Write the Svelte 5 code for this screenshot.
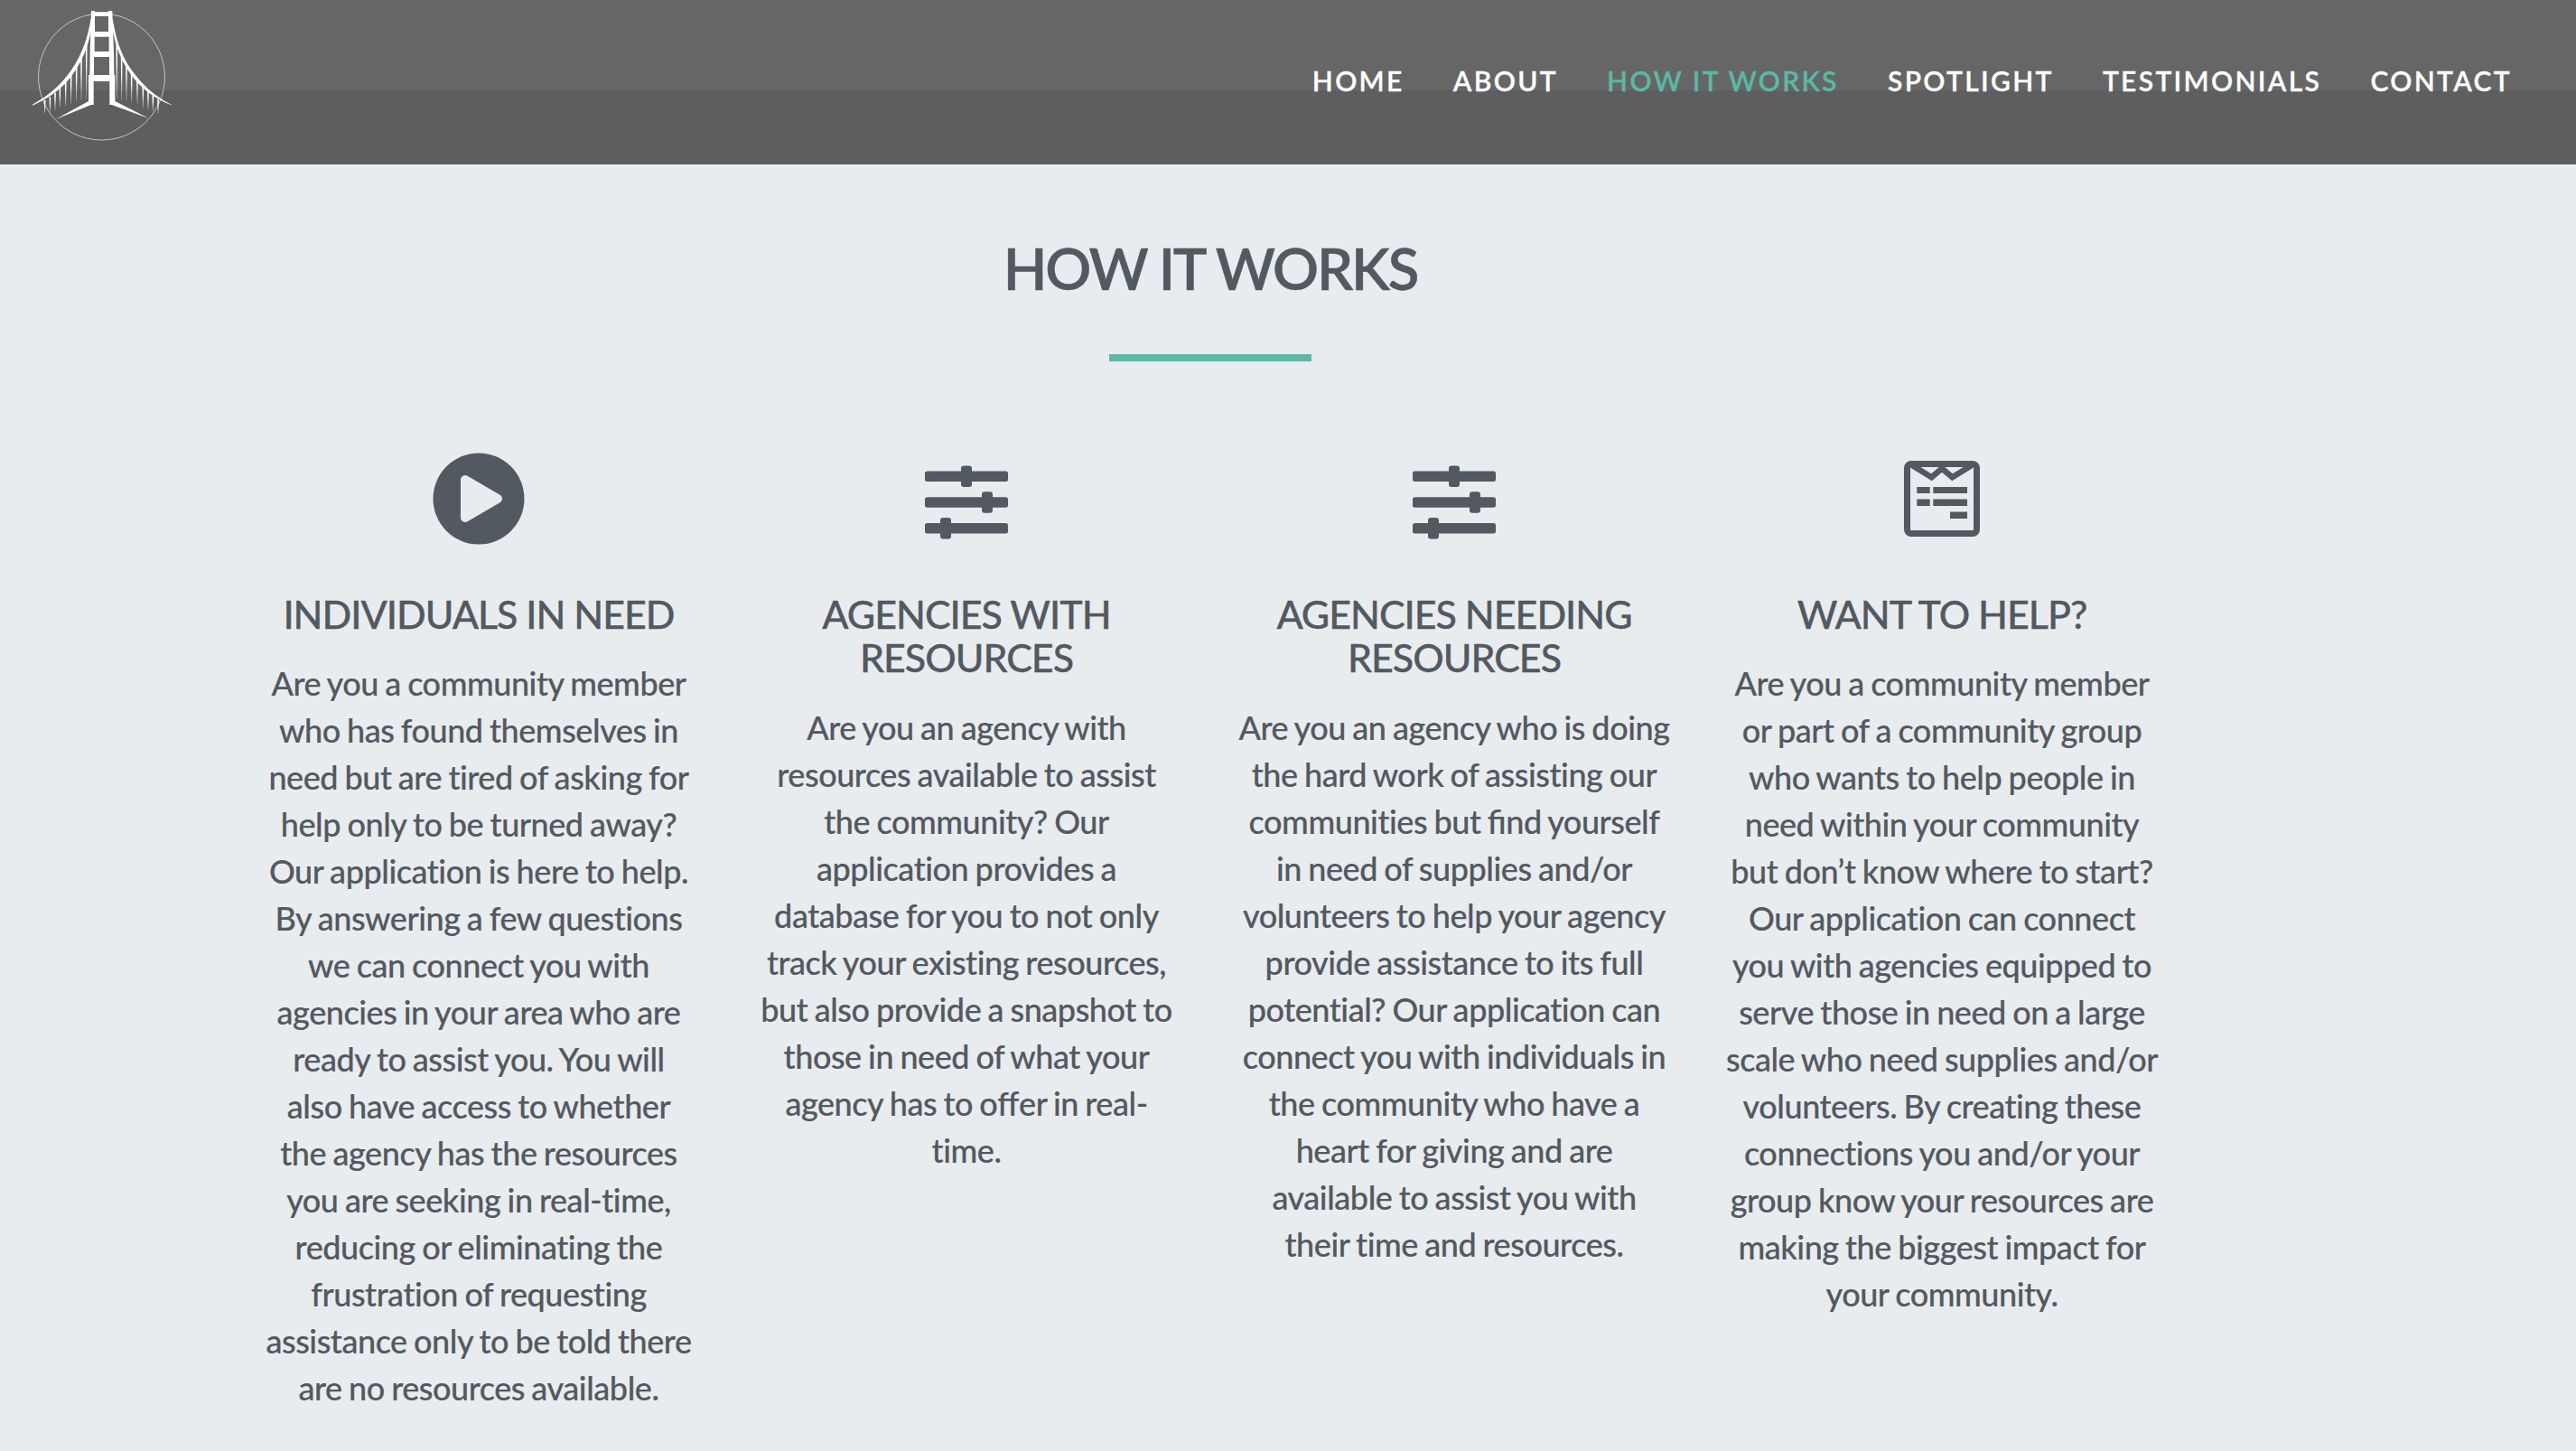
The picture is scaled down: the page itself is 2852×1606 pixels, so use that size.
<script>
  const nav = ['Home', 'About', 'How it works', 'Spotlight', 'Testimonials', 'Contact'];
  const active = 'How it works';

  const columns = [
    {
      icon: 'play',
      title: ['Individuals in need'],
      lines: [
        'Are you a community member', 'who has found themselves in', 'need but are tired of asking for',
        'help only to be turned away?', 'Our application is here to help.', 'By answering a few questions',
        'we can connect you with', 'agencies in your area who are', 'ready to assist you. You will',
        'also have access to whether', 'the agency has the resources', 'you are seeking in real-time,',
        'reducing or eliminating the', 'frustration of requesting', 'assistance only to be told there',
        'are no resources available.'
      ]
    },
    {
      icon: 'sliders',
      title: ['Agencies with', 'resources'],
      lines: [
        'Are you an agency with', 'resources available to assist', 'the community? Our', 'application provides a',
        'database for you to not only', 'track your existing resources,', 'but also provide a snapshot to',
        'those in need of what your', 'agency has to offer in real-', 'time.'
      ]
    },
    {
      icon: 'sliders',
      title: ['Agencies needing', 'resources'],
      lines: [
        'Are you an agency who is doing', 'the hard work of assisting our', 'communities but find yourself',
        'in need of supplies and/or', 'volunteers to help your agency', 'provide assistance to its full',
        'potential? Our application can', 'connect you with individuals in', 'the community who have a',
        'heart for giving and are', 'available to assist you with', 'their time and resources.'
      ]
    },
    {
      icon: 'form',
      title: ['Want to help?'],
      lines: [
        'Are you a community member', 'or part of a community group', 'who wants to help people in',
        'need within your community', 'but don’t know where to start?', 'Our application can connect',
        'you with agencies equipped to', 'serve those in need on a large', 'scale who need supplies and/or',
        'volunteers. By creating these', 'connections you and/or your', 'group know your resources are',
        'making the biggest impact for', 'your community.'
      ]
    }
  ];

  // Letter pairs set as ligatures are split out so they can be styled
  const pieces = (line) => line.split(/(fi|ff)/);

  // Hanger cables: x, top and bottom of each tapering strand
  const hangers = [
    [149, 333, 376], [166, 322, 374], [183, 308, 366], [199, 290, 356], [218, 268, 354], [236, 245, 344],
    [254, 218, 337], [270, 190, 332], [287, 145, 328],
    [388, 145, 330], [404, 185, 334], [420, 214, 334], [437, 240, 340], [456, 262, 344], [475, 285, 358],
    [492, 304, 364], [508, 318, 370], [525, 330, 378]
  ];
</script>

<header class="bar">
  <a class="logo" href="#home" aria-label="Home">
    <svg viewBox="105 33 468 438">
      <defs>
        <linearGradient id="fade" x1="0" y1="0" x2="0" y2="1">
          <stop offset="0.4" stop-color="#fff" />
          <stop offset="1" stop-color="#fff" stop-opacity="0.35" />
        </linearGradient>
      </defs>
      <path class="ring" d="M303 48A210 210 0 1 0 372 48" />
      {#each hangers as [x, top, bottom]}
        <path fill="url(#fade)" d="M{x - 2.6} {top}H{x + 2.6}L{x + 1} {bottom}H{x - 1}Z" />
      {/each}
      <path class="white" d="M302 62C292 120 275 178 236 234C204 279 166 315 108 347V350C168 325 212 288 242 246C284 188 300 128 307 72Z" />
      <path class="white" d="M374 62C384 120 398 178 438 234C472 280 510 318 569 347V349C507 325 464 288 434 246C392 188 378 128 369 72Z" />
      <path class="white" fill-rule="evenodd" d="M303 36H315V40H360V36H373L375 106L378 171L379 249H382L382 336L494 393L371 348H364V270H311V348H303L185 396L294 336V249H298L299 171L301 106ZM315 54V105H360V54ZM314 122V171H362V122ZM312 189V249H363V189Z" />
    </svg>
  </a>
  <nav>
    {#each nav as item}
      <a href="#top" class:active={item === active}>{item}</a>
    {/each}
  </nav>
</header>

<main>
  <h1>How it works</h1>
  <div class="rule"></div>

  <section class="columns">
    {#each columns as col}
      <article>
        <svg class="icon" viewBox="0 0 120 120">
          {#if col.icon === 'play'}
            <circle cx="60" cy="60" r="50.5" />
            <path class="cut" d="M45 39V81L81 60Z" />
          {:else if col.icon === 'sliders'}
            <rect x="14" y="29.5" width="92" height="11.5" rx="2.5" />
            <rect x="54" y="23.5" width="12" height="23.5" rx="3" />
            <rect x="14" y="58.2" width="92" height="11.5" rx="2.5" />
            <rect x="77" y="52.3" width="12" height="23.5" rx="3" />
            <rect x="14" y="87" width="92" height="11.5" rx="2.5" />
            <rect x="31" y="81" width="12" height="23.5" rx="3" />
          {:else}
            <rect class="line" x="21.5" y="21.5" width="77" height="77" rx="4.5" />
            <path class="line zig" d="M27 23L48.5 36.2L60 26.5L71.5 36.2L93 23" />
            <path d="M32.3 47H46.7V54H32.3ZM50.3 47H88V54H50.3ZM32.3 60.5H46.7V68H32.3ZM50.3 60.5H88V68H50.3ZM69 74.5H88V82H69Z" />
          {/if}
        </svg>
        <h2>{#each col.title as t}<span>{t}</span>{/each}</h2>
        <p>{#each col.lines as l}<span>{#each pieces(l) as part, i}{#if i % 2}<i>{part}</i>{:else}{part}{/if}{/each}</span>{/each}</p>
      </article>
    {/each}
  </section>
</main>

<style>
  :global(body) {
    margin: 0;
    background: #e8ecef;
    color: #525960;
    font-family: Lato, 'Liberation Sans', sans-serif;
    overflow: hidden;
  }
  .bar {
    box-sizing: border-box;
    height: 182px;
    padding: 11px 71px 0 35px;
    display: flex;
    justify-content: space-between;
    background: linear-gradient(#666 100px, #5d5e60 100px);
  }
  .logo svg {
    display: block;
    width: 156px;
    height: 146px;
  }
  .white {
    fill: #fff;
  }
  .ring {
    fill: none;
    stroke: #c4c4c4;
    stroke-width: 3;
  }
  nav {
    display: flex;
    gap: 54.2px;
    padding-top: 60px;
  }
  nav a {
    color: #fff;
    text-decoration: none;
    text-transform: uppercase;
    font-size: 30px;
    line-height: 36px;
    font-weight: 600;
    letter-spacing: 2.33px;
    white-space: nowrap;
    -webkit-text-stroke: 0.3px currentColor;
  }
  nav a.active {
    color: #5ab8a5;
  }
  main {
    width: 2160px;
    margin-left: 260px;
    padding-top: 75px;
    text-align: center;
  }
  h1 {
    margin: 0;
    font-size: 63.5px;
    line-height: 80px;
    font-weight: 600;
    letter-spacing: -2.15px;
    text-transform: uppercase;
    -webkit-text-stroke: 0.5px currentColor;
  }
  .rule {
    width: 224px;
    height: 8px;
    margin: 55px auto 0;
    background: #5ab8a5;
  }
  .columns {
    display: grid;
    grid-template-columns: repeat(4, 540px);
    padding-top: 92px;
  }
  .icon {
    display: block;
    width: 120px;
    height: 120px;
    margin: 0 auto 44px;
    fill: #525960;
  }
  .cut {
    fill: #e8ecef;
    stroke: #e8ecef;
    stroke-width: 10;
    stroke-linejoin: round;
  }
  .line {
    fill: none;
    stroke: #525960;
    stroke-width: 7;
  }
  .zig {
    stroke-width: 6.5;
  }
  span {
    display: block;
    white-space: nowrap;
  }
  h2 {
    margin: 0 0 26px;
    font-size: 43px;
    line-height: 48.4px;
    font-weight: 500;
    letter-spacing: -1px;
    text-transform: uppercase;
    -webkit-text-stroke: 0.3px currentColor;
  }
  p {
    margin: 0;
    font-size: 36px;
    line-height: 52px;
    font-weight: 500;
    letter-spacing: -0.45px;
    word-spacing: -1.3px;
    -webkit-text-stroke: 0.2px currentColor;
  }
  i {
    font-style: normal;
    font-feature-settings: 'liga' 1;
  }
</style>
